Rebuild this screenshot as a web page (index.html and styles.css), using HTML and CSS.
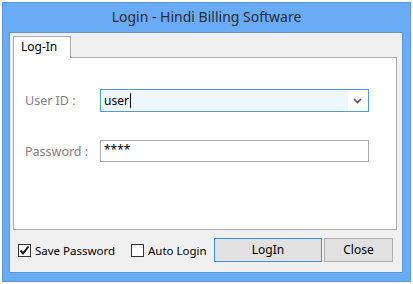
FILE: index.html
```html
<!DOCTYPE html>
<html>
<head>
<meta charset="utf-8">
<link rel="stylesheet" href="styles.css">
</head>
<body>
<div class="window">
  <div class="titlebar">Login - Hindi Billing Software</div>
  <div class="client">
    <div class="tabs">
      <div class="tabstrip"><div class="tab">Log-In</div></div>
      <div class="panel">
        <div class="row row-user">
          <span class="label">User ID :</span>
          <div class="combo">
            <div class="combo-text">user<span class="caret"></span></div>
            <div class="combo-btn">
              <svg width="9" height="6" viewBox="0 0 9 6"><path d="M1 1 L4.5 4.5 L8 1" fill="none" stroke="#555" stroke-width="1.6"/></svg>
            </div>
          </div>
        </div>
        <div class="row row-pass">
          <span class="label">Password :</span>
          <div class="textbox">****</div>
        </div>
      </div>
    </div>
    <div class="bottom">
      <label class="check check1"><span class="box"><svg width="11" height="11" viewBox="0 0 11 11"><path d="M1.5 5.5 L4 8.5 L9.5 1.5" fill="none" stroke="#111" stroke-width="2"/></svg></span>Save Password</label>
      <label class="check check2"><span class="box"></span>Auto Login</label>
      <div class="btn btn-default">LogIn</div>
      <div class="btn btn-close">Close</div>
    </div>
  </div>
</div>
</body>
</html>
```
FILE: styles.css
```css
html, body { margin: 0; padding: 0; background: #fff; }
body { font-family: "Noto Sans", "Open Sans", sans-serif; font-size: 12px; color: #000; }
.window {
  margin: 2px 0 0 2px;
  width: 407px;
  height: 278px;
  background: #6aabf6;
  border: 1px solid #5b95dc;
  display: flex;
  flex-direction: column;
}
.titlebar {
  height: 29px;
  line-height: 28px;
  text-align: center;
  font-size: 14px;
  color: #2b2b2b;
}
.client {
  margin: 0 7px 0 6px;
  height: 236px;
  background: #f0f0f0;
  border: 1px solid #5a98e0;
  padding: 3px 5px 0 3px;
  display: flex;
  flex-direction: column;
}
.tabs { display: flex; flex-direction: column; }
.tabstrip { height: 22px; display: flex; }
.tab {
  width: 58px;
  height: 22px;
  box-sizing: border-box;
  border: 1px solid #adadad;
  border-bottom: none;
  background: #fff;
  padding-left: 7px;
  line-height: 19px;
  position: relative;
  z-index: 1;
}
.panel {
  height: 171px;
  background: #fff;
  border: 1px solid #adadad;
  margin-top: -1px;
  padding: 0 0 0 11px;
}
.row { display: flex; align-items: center; }
.row-user { margin-top: 31px; }
.row-pass { margin-top: 28px; }
.label { width: 75px; color: #857d87; font-size: 12.5px; }
.combo {
  width: 267px;
  height: 21px;
  border: 1px solid #4a9be6;
  display: flex;
  background: #fff;
}
.combo-text {
  flex: 1;
  margin: 1px 0 1px 1px;
  background: #eef6fe;
  line-height: 19px;
  padding-left: 2px;
  display: flex;
  align-items: center;
}
.caret { display: inline-block; width: 1px; height: 15px; background: #000; margin-left: 1px; }
.combo-btn { width: 19px; display: flex; align-items: center; justify-content: center; padding-right: 1px; }
.textbox {
  width: 264px;
  height: 20px;
  border: 1px solid #ababab;
  line-height: 17px;
  padding-left: 3px;
  background: #fff;
}
.bottom {
  display: flex;
  align-items: center;
  margin-top: 8px;
  height: 24px;
}
.check {
  display: flex;
  align-items: center;
  white-space: nowrap;
  flex-shrink: 0;
  font-size: 11.5px;
}
.check1 { width: 113px; margin-left: 5px; }
.check2 { width: 83px; }
.box {
  width: 11px; height: 11px;
  border: 1px solid #333;
  background: #fff;
  margin-right: 4px;
  display: flex;
  align-items: center;
  justify-content: center;
  flex-shrink: 0;
}
.btn {
  flex-shrink: 0;
  height: 22px;
  border: 1px solid #adadad;
  background: #e1e1e1;
  text-align: center;
  line-height: 21px;
}
.btn-default { width: 106px; border-color: #3c8fe6; }
.btn-close { width: 67px; margin-left: 2px; }
```
